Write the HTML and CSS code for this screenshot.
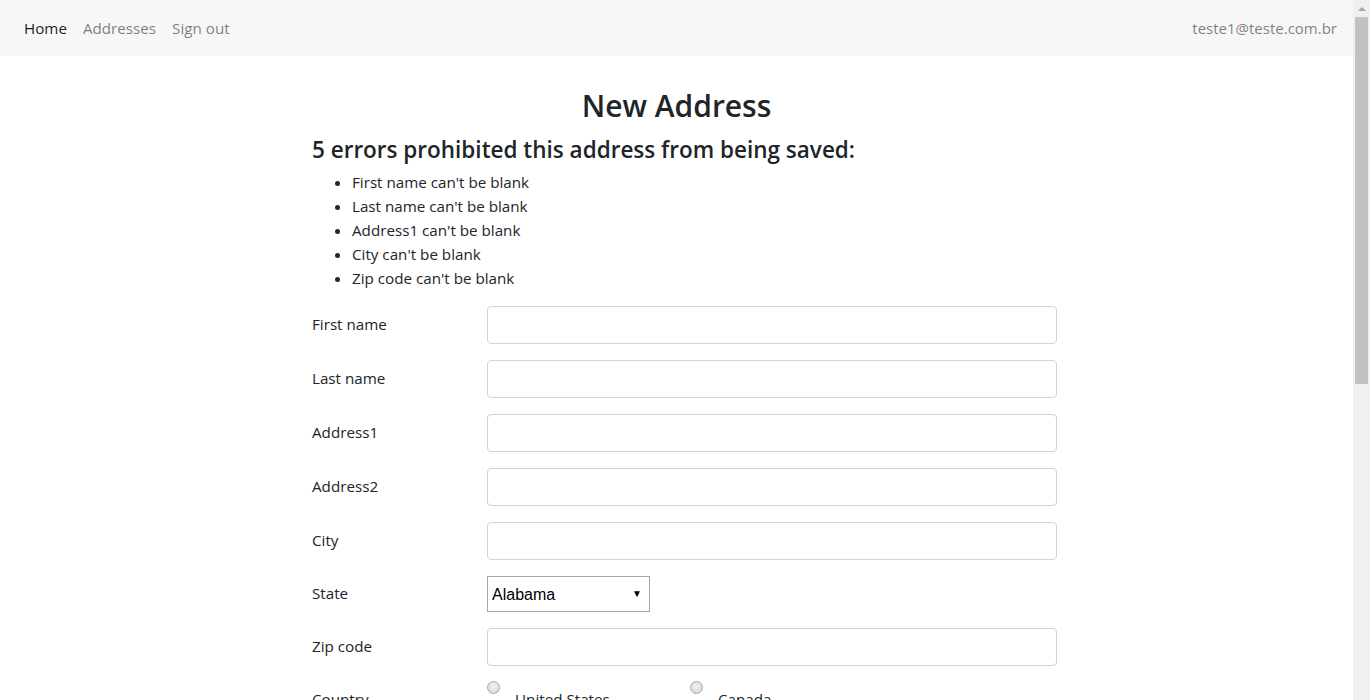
FILE: index.html
```html
<!DOCTYPE html>
<html lang="en">
<head>
<meta charset="utf-8">
<title>New Address</title>
<link rel="stylesheet" href="styles.css">
</head>
<body>
<div class="window">
  <div class="viewport">
    <nav class="navbar">
      <div class="nav-left">
        <a class="nav-link active" href="#">Home</a>
        <a class="nav-link" href="#">Addresses</a>
        <a class="nav-link" href="#">Sign out</a>
      </div>
      <span class="nav-user">teste1@teste.com.br</span>
    </nav>
    <main class="container">
      <h1 class="title">New Address</h1>
      <div class="panel">
        <div class="errors">
          <h2 class="errors-title">5 errors prohibited this address from being saved:</h2>
          <ul class="errors-list">
            <li>First name can't be blank</li>
            <li>Last name can't be blank</li>
            <li>Address1 can't be blank</li>
            <li>City can't be blank</li>
            <li>Zip code can't be blank</li>
          </ul>
        </div>
        <form class="form">
          <div class="form-row">
            <label class="form-label">First name</label>
            <input class="form-input" type="text">
          </div>
          <div class="form-row">
            <label class="form-label">Last name</label>
            <input class="form-input" type="text">
          </div>
          <div class="form-row">
            <label class="form-label">Address1</label>
            <input class="form-input" type="text">
          </div>
          <div class="form-row">
            <label class="form-label">Address2</label>
            <input class="form-input" type="text">
          </div>
          <div class="form-row">
            <label class="form-label">City</label>
            <input class="form-input" type="text">
          </div>
          <div class="form-row">
            <label class="form-label">State</label>
            <div class="select-wrap">
              <select class="form-select"><option>Alabama</option></select>
              <span class="select-arrow">&#9660;</span>
            </div>
          </div>
          <div class="form-row">
            <label class="form-label">Zip code</label>
            <input class="form-input" type="text">
          </div>
          <div class="form-row row-top">
            <label class="form-label label-top">Country</label>
            <div class="radios">
              <label class="radio-option"><input class="radio" type="radio" name="c"><span class="radio-text">United States</span></label>
              <label class="radio-option"><input class="radio" type="radio" name="c"><span class="radio-text">Canada</span></label>
            </div>
          </div>
        </form>
      </div>
    </main>
  </div>
  <div class="scrollbar">
    <div class="sb-btn"><span class="sb-tri"></span></div>
    <div class="sb-track"><div class="sb-thumb"></div></div>
  </div>
</div>
</body>
</html>
```

FILE: styles.css
```css
html, body {
  margin: 0;
  padding: 0;
  height: 700px;
  overflow: hidden;
}
body {
  font-family: "Open Sans", "Noto Sans", sans-serif;
  font-size: 16px;
  color: #212529;
  background: #fff;
}
.window {
  display: flex;
  height: 700px;
  overflow: hidden;
}
.viewport {
  flex: 1;
  overflow: hidden;
  min-width: 0;
}
.navbar {
  height: 56px;
  background: #f7f7f7;
  display: flex;
  align-items: center;
  justify-content: space-between;
  padding: 0 16px;
  box-sizing: border-box;
}
.nav-left {
  display: flex;
}
.nav-link {
  padding: 0 8px;
  color: rgba(0, 0, 0, 0.5);
  text-decoration: none;
  font-size: 15.2px;
  line-height: 24px;
}
.nav-link.active {
  color: rgba(0, 0, 0, 0.9);
}
.nav-user {
  color: rgba(0, 0, 0, 0.5);
  font-size: 15px;
  line-height: 24px;
}
.container {
  max-width: 1140px;
  box-sizing: border-box;
  margin: 0 auto;
  padding: 0 15px;
}
.title {
  margin: 30px 0 0;
  text-align: center;
  font-size: 30px;
  line-height: 40px;
  font-weight: 600;
}
.panel {
  margin-left: 190.5px;
  width: 745px;
}
.errors-title {
  margin: 9px 0 0;
  font-size: 22.5px;
  line-height: 29px;
  font-weight: 600;
}
.errors-list {
  margin: 6px 0 0;
  padding-left: 40px;
  font-size: 15.2px;
  line-height: 24px;
}
.form {
  margin-top: 16px;
}
.form-row {
  display: flex;
  align-items: center;
  margin-bottom: 16px;
}
.row-top {
  align-items: flex-start;
}
.form-label {
  width: 175px;
  flex: none;
  font-size: 15.2px;
  line-height: 24px;
  padding-bottom: 2px;
}
.label-top {
  padding-top: 5px;
  padding-bottom: 0;
}
.form-input {
  width: 570px;
  height: 38px;
  box-sizing: border-box;
  border: 1px solid #ced4da;
  border-radius: 4px;
  padding: 6px 12px;
  font-size: 16px;
  margin: 0;
  background: #fff;
}
.select-wrap {
  position: relative;
  width: 163px;
  height: 36px;
}
.form-select {
  appearance: none;
  -webkit-appearance: none;
  width: 163px;
  height: 36px;
  box-sizing: border-box;
  border: 1px solid #a6a6a6;
  border-radius: 0;
  background: #fff;
  font-family: "Liberation Sans", Arial, sans-serif;
  font-size: 16px;
  color: #000;
  padding: 0 0 0 4px;
  margin: 0;
}
.select-arrow {
  position: absolute;
  right: 8px;
  top: 12px;
  font-size: 10px;
  line-height: 11px;
  color: #000;
  pointer-events: none;
}
.radios {
  display: flex;
}
.radio-option {
  width: 203px;
  display: flex;
  align-items: flex-start;
  font-size: 15.2px;
  line-height: 24px;
}
.radio {
  appearance: none;
  -webkit-appearance: none;
  width: 13px;
  height: 13px;
  margin: -1px 0 0;
  border: 1px solid #a8a8a8;
  border-radius: 50%;
  box-sizing: border-box;
  background: radial-gradient(circle at 50% 40%, #f2f2f2 0%, #dcdcdc 70%, #cfcfcf 100%);
  flex: none;
}
.radio-text {
  margin-left: 15px;
  padding-top: 5px;
}
.scrollbar {
  width: 17px;
  flex: none;
  background: #f0f0f0;
  display: flex;
  flex-direction: column;
}
.sb-btn {
  height: 17px;
  display: flex;
  align-items: center;
  justify-content: center;
}
.sb-tri {
  width: 0;
  height: 0;
  border-left: 4px solid transparent;
  border-right: 4px solid transparent;
  border-bottom: 4px solid #a3a3a3;
}
.sb-track {
  flex: 1;
  padding: 0 2px;
}
.sb-thumb {
  height: 367px;
  background: #c1c1c1;
}
```
